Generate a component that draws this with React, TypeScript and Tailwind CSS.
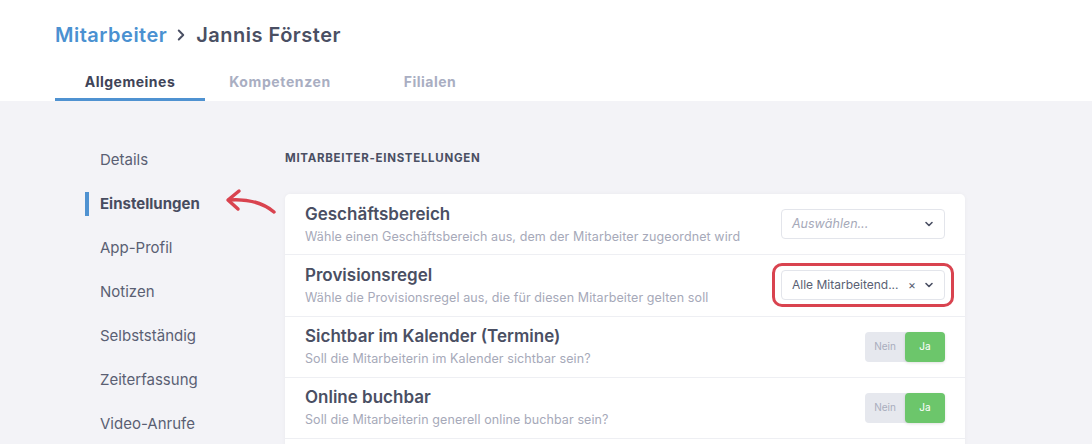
import React from "react";
import { ChevronDown, ChevronRight } from "lucide-react";

const font = { fontFamily: "Inter, 'Noto Sans', sans-serif" };

function Select({ value, placeholder }: { value?: string; placeholder?: string }) {
  return (
    <div className="w-[164px] h-[30px] border border-[#e3e5eb] rounded-[4px] bg-white flex items-center pl-[10px] pr-[9px]">
      {value ? (
        <span className="text-[12px] text-[#5a5f73] whitespace-nowrap">{value}</span>
      ) : (
        <span className="text-[12.5px] italic text-[#a6a9b9] whitespace-nowrap">{placeholder}</span>
      )}
      <div className="ml-auto flex items-center">
        {value && <span className="text-[12px] text-[#5a5f73] mr-[7px] leading-none">×</span>}
        <ChevronDown size={12} strokeWidth={3.2} className="text-[#4a4f63]" />
      </div>
    </div>
  );
}

function Toggle() {
  return (
    <div className="flex w-[80px] h-[30px] rounded-[4px] bg-[#e6e8ee]">
      <div className="w-[40px] flex items-center justify-center text-[10px] text-[#a9adbd]">Nein</div>
      <div className="w-[40px] flex items-center justify-center text-[10px] text-white bg-[#6cc66b] rounded-[4px] shadow-[0_1px_3px_rgba(0,0,0,0.12)]">Ja</div>
    </div>
  );
}

function Row({ title, sub, right }: { title: string; sub: string; right: React.ReactNode }) {
  return (
    <div className="h-[61.25px] border-b border-[#eeeff3] flex items-center justify-between pl-[20px] pr-[20px]">
      <div className="flex flex-col gap-[3px]">
        <div className="text-[17px] leading-[22px] font-semibold text-[#4a4f63]">{title}</div>
        <div className="text-[12.5px] leading-[18px] text-[#a6a9b9] tracking-[0.1px]">{sub}</div>
      </div>
      {right}
    </div>
  );
}

export default function App() {
  const items = ["Details", "Einstellungen", "App-Profil", "Notizen", "Selbstständig", "Zeiterfassung", "Video-Anrufe"];
  return (
    <div className="w-[1092px] h-[444px] overflow-hidden bg-[#f3f3f7]" style={font}>
      <div className="bg-white h-[101px] pl-[55px] pt-[22px] flex flex-col">
        <div className="flex items-center h-[26px] text-[20px] font-semibold tracking-[0.5px]">
          <span className="text-[#4a91d1]">Mitarbeiter</span>
          <ChevronRight size={18} strokeWidth={2.6} className="text-[#4a4f63] ml-[5px] mr-[6px]" />
          <span className="text-[#4a4f63]">Jannis Förster</span>
        </div>
        <div className="flex mt-[20px]">
          <div className="w-[150px] h-[33px] flex items-start justify-center border-b-[3px] border-[#4f92d1] text-[14px] font-bold text-[#3f4458] pt-[3px] tracking-[0.5px]">Allgemeines</div>
          <div className="w-[150px] h-[33px] flex items-start justify-center text-[14px] font-bold text-[#a9aec2] pt-[3px] tracking-[0.6px]">Kompetenzen</div>
          <div className="w-[150px] h-[33px] flex items-start justify-center text-[14px] font-bold text-[#a9aec2] pt-[3px] tracking-[0.5px]">Filialen</div>
        </div>
      </div>
      <div className="flex pl-[85px] relative">
        <div className="w-[200px] pt-[37px] flex flex-col">
          {items.map((it) => (
            <div key={it} className="h-[44px] flex items-center relative pl-[15px]">
              {it === "Einstellungen" && <div className="absolute left-0 top-[10px] w-[4px] h-[24px] bg-[#4f92d1]" />}
              <span className={it === "Einstellungen" ? "text-[15px] font-bold text-[#474c60]" : "text-[15px] text-[#5a5f73]"}>{it}</span>
            </div>
          ))}
        </div>
        <svg className="absolute left-[220px] top-[83px]" width="60" height="35" viewBox="0 0 60 35" fill="none">
          <path d="M54 28 Q37 14 9 16" stroke="#d9434f" strokeWidth="3.5" strokeLinecap="round" fill="none" />
          <path d="M19 7 L8 16 L18 25" stroke="#d9434f" strokeWidth="3.5" strokeLinecap="round" strokeLinejoin="round" fill="none" />
        </svg>
        <div className="w-[680px] pt-[49px]">
          <div className="text-[11.5px] leading-[16px] font-bold text-[#4a4f63] tracking-[0.7px]">MITARBEITER-EINSTELLUNGEN</div>
          <div className="mt-[28px] bg-white rounded-[5px] shadow-[0_0_4px_rgba(0,0,0,0.04)]">
            <Row title="Geschäftsbereich" sub="Wähle einen Geschäftsbereich aus, dem der Mitarbeiter zugeordnet wird" right={<Select placeholder="Auswählen..." />} />
            <Row
              title="Provisionsregel"
              sub="Wähle die Provisionsregel aus, die für diesen Mitarbeiter gelten soll"
              right={
                <div className="relative">
                  <Select value="Alle Mitarbeitend..." />
                  <div className="absolute -left-[9px] -right-[9px] -top-[7px] -bottom-[7px] border-[3px] border-[#d9434f] rounded-[10px] pointer-events-none" />
                </div>
              }
            />
            <Row title="Sichtbar im Kalender (Termine)" sub="Soll die Mitarbeiterin im Kalender sichtbar sein?" right={<Toggle />} />
            <Row title="Online buchbar" sub="Soll die Mitarbeiterin generell online buchbar sein?" right={<Toggle />} />
            <div className="h-[62px]" />
          </div>
        </div>
      </div>
    </div>
  );
}
